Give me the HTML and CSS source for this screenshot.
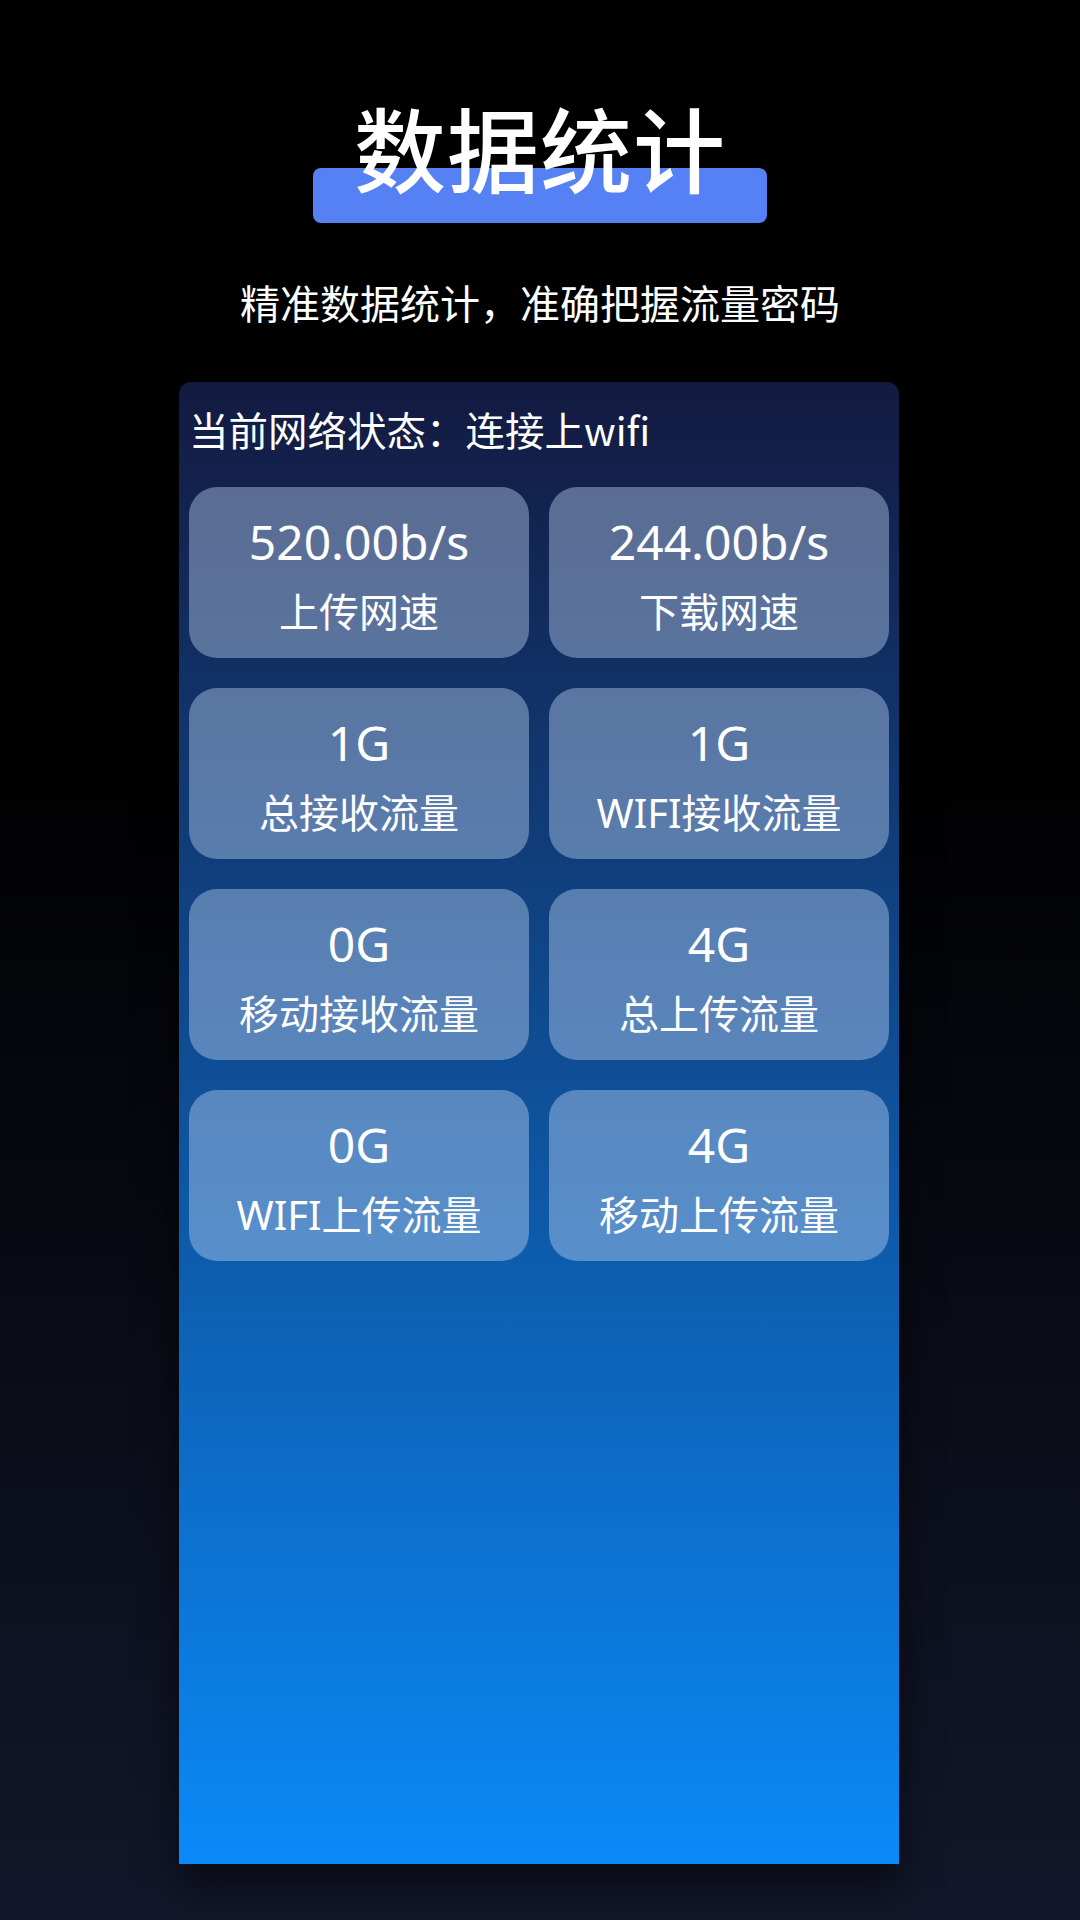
FILE: index.html
```html
<!DOCTYPE html>
<html lang="zh-CN">
<head>
    <meta charset="UTF-8">
    <meta name="viewport" content="width=device-width, initial-scale=1.0">
    <title>数据统计</title>
    <link rel="stylesheet" href="styles.css">
</head>
<body>
    <div class="page">
        <div class="header">
            <h1 class="title">数据统计</h1>
            <p class="subtitle">精准数据统计，准确把握流量密码</p>
        </div>
        <div class="card">
            <p class="status">当前网络状态：连接上wifi</p>
            <div class="grid">
                <div class="tile">
                    <span class="value">520.00b/s</span>
                    <span class="label">上传网速</span>
                </div>
                <div class="tile">
                    <span class="value">244.00b/s</span>
                    <span class="label">下载网速</span>
                </div>
                <div class="tile">
                    <span class="value">1G</span>
                    <span class="label">总接收流量</span>
                </div>
                <div class="tile">
                    <span class="value">1G</span>
                    <span class="label">WIFI接收流量</span>
                </div>
                <div class="tile">
                    <span class="value">0G</span>
                    <span class="label">移动接收流量</span>
                </div>
                <div class="tile">
                    <span class="value">4G</span>
                    <span class="label">总上传流量</span>
                </div>
                <div class="tile">
                    <span class="value">0G</span>
                    <span class="label">WIFI上传流量</span>
                </div>
                <div class="tile">
                    <span class="value">4G</span>
                    <span class="label">移动上传流量</span>
                </div>
            </div>
        </div>
    </div>
</body>
</html>
```

FILE: styles.css
```css
* {
    box-sizing: border-box;
}
body {
    margin: 0;
    width: 1080px;
    height: 1920px;
    overflow: hidden;
    background: linear-gradient(180deg, #000 0%, #000 38%, #13172b 100%);
    color: #fff;
    font-family: "Noto Sans", "Noto Sans CJK SC", sans-serif;
}
.page {
    display: flex;
    flex-direction: column;
    align-items: center;
}
.header {
    position: relative;
    z-index: 0;
    display: flex;
    flex-direction: column;
    align-items: center;
    padding-top: 88px;
}
.title {
    position: relative;
    margin: 0;
    font-family: "Noto Sans CJK SC", sans-serif;
    font-size: 92px;
    font-weight: 500;
    line-height: 116px;
    letter-spacing: 1px;
}
/* blue bar behind the lower half of the title */
.title::before {
    content: "";
    position: absolute;
    z-index: -1;
    left: 50%;
    top: 80px;
    width: 454px;
    height: 55px;
    margin-left: -227px;
    background: #5681f4;
    border-radius: 8px;
}
.subtitle {
    margin: 73px 0 0;
    font-family: "Noto Sans CJK SC", sans-serif;
    font-size: 40px;
    line-height: 50px;
}
.card {
    width: 720px;
    height: 1482px;
    margin-top: 55px;
    margin-right: 2px;
    padding: 22px 10px 0 10px;
    border-radius: 12px 12px 0 0;
    background: linear-gradient(180deg, #131a40 0%, #0a8af8 100%);
    box-shadow: 0 24px 40px rgba(0, 0, 0, 0.55);
}
.status {
    margin: 0 0 33px;
    font-family: "Noto Sans CJK SC", sans-serif;
    font-size: 39.5px;
    line-height: 50px;
}
.grid {
    display: grid;
    grid-template-columns: 1fr 1fr;
    column-gap: 20px;
    row-gap: 30px;
}
.tile {
    height: 171px;
    padding-top: 25px;
    display: flex;
    flex-direction: column;
    align-items: center;
    border-radius: 28px;
    background: rgba(200, 220, 250, 0.4);
}
.value {
    font-size: 48px;
    line-height: 60px;
}
.label {
    margin-top: 16px;
    font-family: "Noto Sans", "Noto Sans CJK SC", sans-serif;
    font-size: 40px;
    line-height: 48px;
}
```
